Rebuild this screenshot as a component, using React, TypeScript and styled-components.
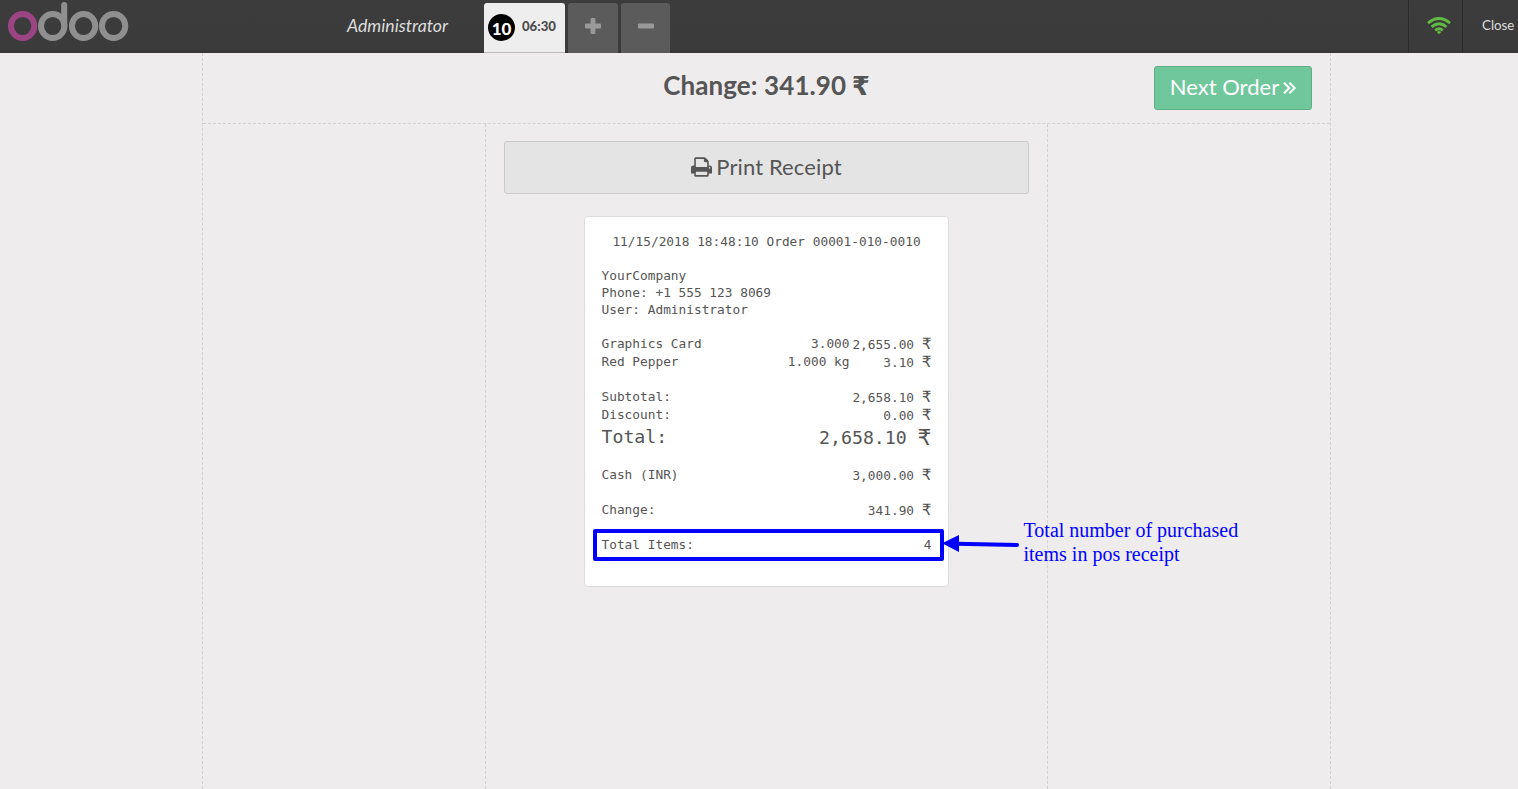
import React from "react";
import styled, { createGlobalStyle } from "styled-components";

const GlobalStyle = createGlobalStyle`
  * { box-sizing: border-box; }
  body {
    margin: 0;
    overflow: hidden;
    background: #eeeced;
    color: #555;
    font-family: Lato, "Liberation Sans", sans-serif;
  }
  button { font-family: inherit; margin: 0; padding: 0; }
`;

const Page = styled.div`
  display: flex;
  flex-direction: column;
  height: 789px;
`;

const TopBar = styled.header`
  display: flex;
  flex: none;
  height: 53px;
  background: linear-gradient(#3c3c3c 0, #3b3b3b 50px, #343434 53px);
  color: #ddd;
`;

const Brand = styled.div`
  display: flex;
  width: 484px;
  justify-content: space-between;
  padding: 0 36px 0 8px;
`;

const UserName = styled.span`
  font-size: 17.7px;
  font-style: italic;
  line-height: 51px;
`;

const Tabs = styled.nav`
  display: flex;
  flex: 1;
  align-items: flex-end;
  gap: 3px;
`;

const OrderTab = styled.div`
  display: flex;
  width: 81px;
  height: 50px;
  padding: 0 9px 0 4px;
  justify-content: space-between;
  background: #eee;
  border-bottom: 1px solid #bbb;
  border-radius: 3px 3px 0 0;
  color: #4c4c4c;
  font-size: 13.2px;
  font-weight: 900;
  line-height: 46px;
`;

const OrderNumber = styled.span`
  width: 27px;
  height: 27px;
  margin-top: 11px;
  border-radius: 50%;
  background: #000;
  color: #fff;
  font-size: 17px;
  line-height: 29px;
  text-align: center;
`;

const TabButton = styled.button<{ $width: number }>`
  display: flex;
  width: ${(p) => p.$width}px;
  height: 50px;
  align-items: center;
  justify-content: center;
  padding-bottom: 4px;
  border: 0;
  border-radius: 3px 3px 0 0;
  background: #5b5b5b;
  color: #999;
`;

const StatusItem = styled.div<{ $width: number }>`
  display: flex;
  width: ${(p) => p.$width}px;
  align-items: center;
  justify-content: center;
  padding: 0 0 3px 6px;
  border-left: 1px solid #2c2c2c;
  font-size: 14px;

  svg { margin-top: 2px; }
`;

const CloseItem = styled(StatusItem)`
  justify-content: flex-start;
  padding-left: 19px;
  font-size: 13.3px;
`;

const Screen = styled.main`
  display: flex;
  flex: 1;
  flex-direction: column;
  width: 1129px;
  margin-left: 202px;
  border: dashed #d3d1d2;
  border-width: 0 1px;
`;

const TitleRow = styled.div`
  display: grid;
  grid-template-columns: 1fr 300px 1fr;
  height: 71px;
  padding-right: 18px;
  border-bottom: 1px dashed #d3d1d2;
`;

const ChangeTitle = styled.h1`
  grid-column: 2;
  margin: 0 -9px 0 9px;
  font-size: 26px;
  font-weight: 700;
  letter-spacing: 0.1px;
  line-height: 65px;
  text-align: center;
  white-space: nowrap;
`;

const TitleCurrency = styled.span`
  margin-left: -1px;
  font-family: "DejaVu Sans", sans-serif;
  line-height: 1;
`;

const NextButton = styled.button`
  display: flex;
  width: 158px;
  height: 44px;
  margin-top: 13px;
  padding-bottom: 3px;
  align-items: center;
  justify-content: center;
  justify-self: end;
  gap: 4px;
  border: 1px solid #5fae86;
  border-radius: 3px;
  background: #71c79c;
  color: #fff;
  font-size: 22px;

  svg { margin-top: 2px; }
`;

const Columns = styled.div`
  display: grid;
  flex: 1;
  grid-template-columns: 282px 563px 1fr;
`;

const ReceiptColumn = styled.section`
  display: flex;
  grid-column: 2;
  flex-direction: column;
  align-items: center;
  padding-top: 17px;
  border: dashed #d3d1d2;
  border-width: 0 1px;
`;

const PrintButton = styled.button`
  display: flex;
  width: 525px;
  height: 53px;
  padding-bottom: 2px;
  align-items: center;
  justify-content: center;
  gap: 4px;
  border: 1px solid #cbcbcb;
  border-radius: 3px;
  background: #e4e4e4;
  color: #555;
  font-size: 22px;
  letter-spacing: 0.12px;
`;

const Receipt = styled.article`
  width: 365px;
  height: 371px;
  margin-top: 22px;
  padding: 16px 16.5px 0;
  border: 1px solid #dcdcdc;
  border-radius: 4px;
  background: #fff;
  font-family: "DejaVu Sans Mono", "Liberation Mono", monospace;
  font-size: 12.8px;
  line-height: 17px;
  white-space: pre;
`;

const OrderLine = styled.div`
  text-align: center;
`;

const Block = styled.div`
  margin-top: 17px;
`;

const Row = styled.div<{ $large?: boolean }>`
  position: relative;
  display: grid;
  grid-template-columns: 1fr auto 82px;
  height: ${(p) => (p.$large ? 25 : 18)}px;
  font-size: ${(p) => (p.$large ? "18.2px" : "inherit")};
  line-height: ${(p) => (p.$large ? 25 : 17)}px;
`;

const Amount = styled.span<{ $level?: boolean }>`
  display: flex;
  grid-column: 3;
  justify-content: flex-end;
  padding-top: ${(p) => (p.$level ? 0 : 1)}px;
`;

const Currency = styled.span`
  margin-left: 0.5em;
  font-family: "DejaVu Sans", sans-serif;
  font-size: 1.2em;
`;

const Highlight = styled.div`
  position: absolute;
  top: -7px;
  left: -8.5px;
  width: 351px;
  height: 32px;
  border: 4px solid #00f;
  border-radius: 2px;
`;

const Arrow = styled.svg`
  position: absolute;
  top: -2px;
  left: 340.5px;
`;

const Note = styled.p`
  position: absolute;
  top: -18px;
  left: 422px;
  margin: 0;
  color: #00f;
  font-family: "Liberation Serif", serif;
  font-size: 20px;
  line-height: 24px;
`;

const Logo = () => (
  <svg width="121" height="53" viewBox="8 0 121 53" fill="none" strokeWidth="6">
    <ellipse cx="22.6" cy="26" rx="11.7" ry="12" stroke="#9c4584" />
    <g stroke="#8f8f8f">
      <ellipse cx="52.7" cy="26" rx="11.7" ry="12" />
      <path d="M64.2 5V26" strokeLinecap="round" />
      <ellipse cx="83.6" cy="26" rx="11.7" ry="12" />
      <ellipse cx="113.6" cy="26" rx="11.7" ry="12" />
    </g>
  </svg>
);

const WifiIcon = () => (
  <svg width="24" height="18" viewBox="0 0 24 18" fill="none" stroke="#62b944" strokeWidth="2.8">
    <path d="M1 6.1Q12-3.2 23 6.1" />
    <path d="M4.6 9.8Q12 3.8 19.4 9.8" />
    <path d="M8.2 13.3Q12 10.3 15.8 13.3" />
    <path d="M9.8 15Q12 13.2 14.2 15L12 17.3Z" fill="#62b944" stroke="none" />
  </svg>
);

const PrintIcon = () => (
  <svg width="21" height="20" viewBox="64 128 1664 1536" fill="currentColor">
    <path d="M448 1536h896v-256h-896v256zm0-640h896v-384h-160q-40 0-68-28t-28-68v-160h-640v640zm1152 64q0-26-19-45t-45-19-45 19-19 45 19 45 45 19 45-19 19-45zm128 0v416q0 13-9.5 22.5t-22.5 9.5h-224v160q0 40-28 68t-68 28h-960q-40 0-68-28t-28-68v-160h-224q-13 0-22.5-9.5t-9.5-22.5v-416q0-79 56.5-135.5t135.5-56.5h64v-544q0-40 28-68t68-28h672q40 0 88 20t76 48l152 152q28 28 48 76t20 88v256h64q79 0 135.5 56.5t56.5 135.5z" />
  </svg>
);

interface MoneyProps {
  value: string;
}

const Money = ({ value }: MoneyProps) => (
  <Amount>
    {value}
    <Currency>₹</Currency>
  </Amount>
);

const items = [
  { name: "Graphics Card", quantity: "3.000", price: "2,655.00" },
  { name: "Red Pepper", quantity: "1.000 kg", price: "3.10" },
];

const totals = [
  { label: "Subtotal:", value: "2,658.10" },
  { label: "Discount:", value: "0.00" },
  { label: "Total:", value: "2,658.10", large: true },
];

export default function App() {
  return (
    <Page>
      <GlobalStyle />
      <TopBar>
        <Brand>
          <Logo />
          <UserName>Administrator</UserName>
        </Brand>
        <Tabs>
          <OrderTab>
            <OrderNumber>10</OrderNumber>
            <span>06:30</span>
          </OrderTab>
          <TabButton $width={50} aria-label="New order">
            <svg width="16" height="16" viewBox="0 0 16 16" fill="currentColor">
              <rect y="5.6" width="16" height="4.8" rx="1" />
              <rect x="5.6" width="4.8" height="16" rx="1" />
            </svg>
          </TabButton>
          <TabButton $width={49} aria-label="Remove order">
            <svg width="16" height="16" viewBox="0 0 16 16" fill="currentColor">
              <rect y="5.6" width="16" height="4.8" rx="1" />
            </svg>
          </TabButton>
        </Tabs>
        <StatusItem $width={54}>
          <WifiIcon />
        </StatusItem>
        <CloseItem $width={56}>Close</CloseItem>
      </TopBar>
      <Screen>
        <TitleRow>
          <ChangeTitle>
            Change: 341.90 <TitleCurrency>₹</TitleCurrency>
          </ChangeTitle>
          <NextButton>
            Next Order
            <svg width="13" height="14" viewBox="0 0 13 14" fill="none" stroke="currentColor" strokeWidth="2">
              <path d="M1 1.7L6.3 7L1 12.3M6.4 1.7L11.7 7L6.4 12.3" />
            </svg>
          </NextButton>
        </TitleRow>
        <Columns>
          <ReceiptColumn>
            <PrintButton>
              <PrintIcon />
              Print Receipt
            </PrintButton>
            <Receipt>
              <OrderLine>11/15/2018 18:48:10 Order 00001-010-0010</OrderLine>
              <Block>
                <div>YourCompany</div>
                <div>Phone: +1 555 123 8069</div>
                <div>User: Administrator</div>
              </Block>
              <Block>
                {items.map((item) => (
                  <Row key={item.name}>
                    <span>{item.name}</span>
                    <span>{item.quantity}</span>
                    <Money value={item.price} />
                  </Row>
                ))}
              </Block>
              <Block>
                {totals.map((total) => (
                  <Row key={total.label} $large={total.large}>
                    <span>{total.label}</span>
                    <Money value={total.value} />
                  </Row>
                ))}
              </Block>
              <Block>
                <Row>
                  <span>Cash (INR)</span>
                  <Money value="3,000.00" />
                </Row>
              </Block>
              <Block>
                <Row>
                  <span>Change:</span>
                  <Money value="341.90" />
                </Row>
              </Block>
              <Block>
                <Row>
                  <span>Total Items:</span>
                  <Amount $level>4</Amount>
                  <Highlight />
                  <Arrow width="78" height="22" viewBox="0 0 78 22">
                    <path d="M14 9.7L75 11" stroke="#00f" strokeWidth="4" strokeLinecap="round" />
                    <path d="M0 9.3L17 1V18Z" fill="#00f" />
                  </Arrow>
                  <Note>{"Total number of purchased\nitems in pos receipt"}</Note>
                </Row>
              </Block>
            </Receipt>
          </ReceiptColumn>
        </Columns>
      </Screen>
    </Page>
  );
}
